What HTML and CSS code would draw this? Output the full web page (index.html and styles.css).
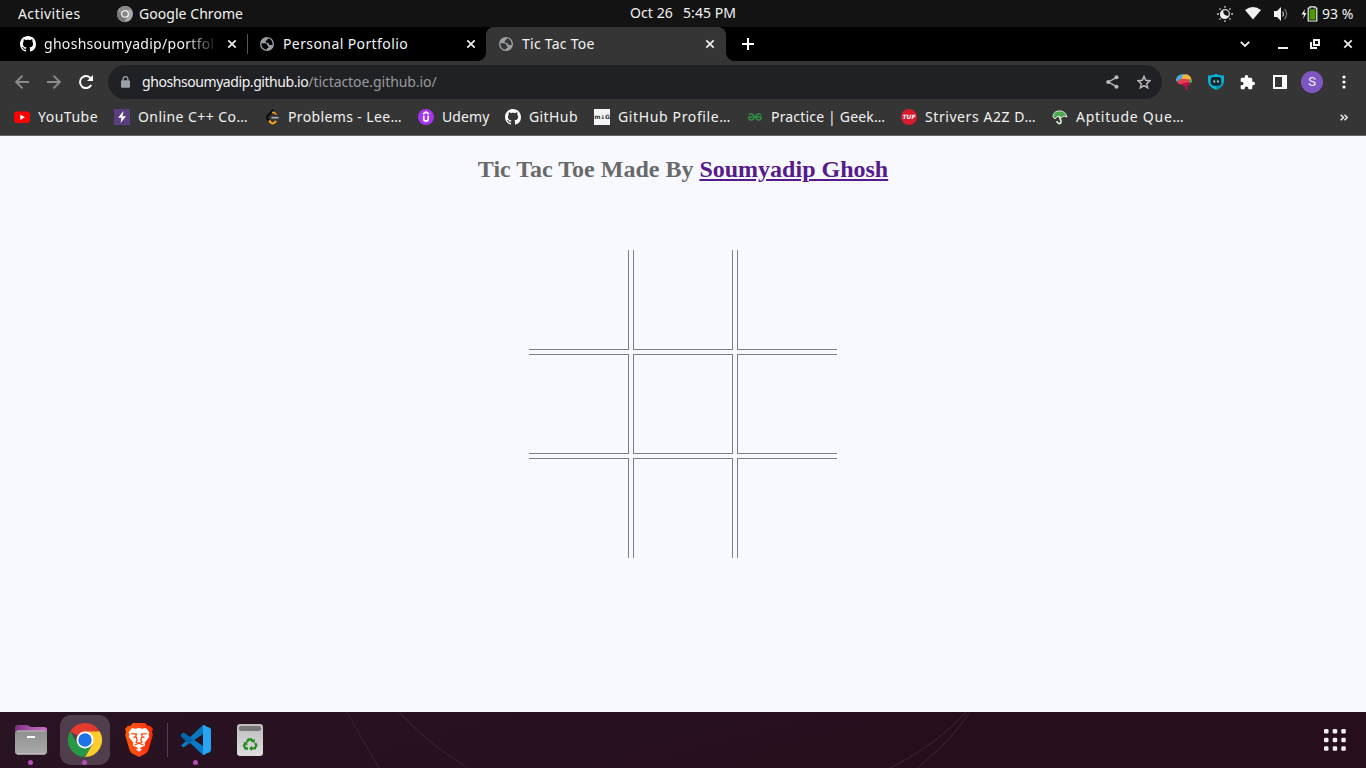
FILE: index.html
```html
<!DOCTYPE html>
<html lang="en">
<head>
<meta charset="utf-8">
<title>Tic Tac Toe</title>
<link rel="stylesheet" href="styles.css">
</head>
<body>
<svg class="defs" width="0" height="0" aria-hidden="true">
  <symbol id="github" viewBox="0 0 16 16"><path fill="#fff" d="M8 0C3.58 0 0 3.58 0 8c0 3.54 2.29 6.53 5.47 7.59.4.07.55-.17.55-.38 0-.19-.01-.82-.01-1.49-2.01.37-2.53-.49-2.69-.94-.09-.23-.48-.94-.82-1.13-.28-.15-.68-.52-.01-.53.63-.01 1.08.58 1.23.82.72 1.21 1.87.87 2.33.66.07-.52.28-.87.51-1.07-1.78-.2-3.64-.89-3.64-3.95 0-.87.31-1.59.82-2.15-.08-.2-.36-1.02.08-2.12 0 0 .67-.21 2.2.82.64-.18 1.32-.27 2-.27s1.36.09 2 .27c1.53-1.04 2.2-.82 2.2-.82.44 1.1.16 1.92.08 2.12.51.56.82 1.27.82 2.15 0 3.07-1.87 3.75-3.65 3.95.29.25.54.73.54 1.48 0 1.07-.01 1.93-.01 2.2 0 .21.15.46.55.38A8.01 8.01 0 0 0 16 8c0-4.42-3.58-8-8-8z"/></symbol>
  <symbol id="globe" viewBox="2 2 20 20"><circle cx="12" cy="12" r="10" fill="#9aa0a6"/><path fill="var(--land)" d="M4.200 11H9q3.500 0 3.500 2.500t2 2q.5 2.500-2.500 2.500v2H11C7 19.500 4 16.100 4 12c0-.5.100-.7.2-1ZM13 4.200h2C17.900 5.400 20 8.600 20 12l-.2 1.300h-4.300L14 10.500l-3-.3-1-1.700q0-1.700 2-1.700Z"/></symbol>
  <symbol id="close" viewBox="0 0 10 10"><path d="m1.300 1.300 7.400 7.400m0-7.400L1.300 8.700" stroke="#eee" stroke-width="1.700"/></symbol>
</svg>

<header class="panel">
  <span class="activities">Activities</span>
  <span class="app"><svg width="16" height="16" viewBox="0 0 16 16"><circle cx="8" cy="8" r="8" fill="#aaa"/><path d="M8 0a8 8 0 0 1 7 4H8a4 4 0 0 0-4 3L2 3a8 8 0 0 1 6-3" fill="#898989"/><path d="M1 4a8 8 0 0 0 6 12l4-6H6Z" fill="#777"/><circle cx="8" cy="8" r="3.300" fill="#858585" stroke="#fff" stroke-width="1.100"/></svg><span class="app-name">Google Chrome</span></span>
  <span class="clock"><span class="date">Oct 26</span><span class="time">5:45 PM</span></span>
  <span class="status">
    <svg width="16" height="16" viewBox="0 0 16 16"><circle cx="8" cy="8" r="4.300" fill="none" stroke="#ddd" stroke-width="1.200"/><path d="M6.400 4.500A4.200 4.200 0 1 0 11.500 9.600 4.200 4.200 0 0 1 6.400 4.500" fill="#eee"/><path d="M8 0v1.800M8 14.200V16M0 8h1.800M14.200 8H16M2.500 2.500l1.100 1.100m8.800 8.800 1.100 1.100m0-11-1.100 1.100m-8.800 8.800-1.100 1.100" stroke="#ddd" stroke-width="1.300"/></svg>
    <svg width="16" height="13" viewBox="0 0 16 13"><path d="M0 3Q8-2.800 16 3L8 12.500Z" fill="#f2f2f2"/></svg>
    <svg width="16" height="14" viewBox="0 0 16 14"><path d="M1 4h3l4-4v14l-4-4H1Z" fill="#f2f2f2"/><path d="M9.500 4.500q2 2.500 0 5" fill="none" stroke="#ccc" stroke-width="1.100"/><path d="M11.500 2q4.300 5 0 10" fill="none" stroke="#777" stroke-width="1.200"/></svg>
    <svg width="17" height="16" viewBox="0 0 17 16"><path d="M4 3 .5 8.500H3L2 13l3.500-6H3.300Z" fill="#f2f2f2"/><path d="M9 2V.8h5V2h1.800v13H7.200V2Z" fill="none" stroke="#f2f2f2" stroke-width="1.200"/><path d="M8.500 3.200h6v10.400h-6z" fill="#4e9a06"/></svg>
    <span class="percent">93 %</span>
  </span>
</header>

<nav class="tabs">
  <div class="tab first"><svg width="16" height="16"><use href="#github"/></svg><span class="tab-title faded">ghoshsoumyadip/portfol</span><svg class="x" width="10" height="10"><use href="#close"/></svg></div>
  <div class="tab second"><svg width="14" height="14"><use href="#globe"/></svg><span class="tab-title">Personal Portfolio</span><svg class="x" width="10" height="10"><use href="#close"/></svg></div>
  <div class="tab active"><svg width="14" height="14"><use href="#globe"/></svg><span class="tab-title ttt">Tic Tac Toe</span><svg class="x" width="10" height="10"><use href="#close"/></svg></div>
  <svg class="plus" width="12" height="12"><path d="M6 0v12M0 6h12" stroke="#fff" stroke-width="2"/></svg>
  <div class="window-buttons">
    <svg width="10" height="6"><path d="m.8.8 4.200 4.200L9.200.8" fill="none" stroke="#eee" stroke-width="1.800"/></svg>
    <svg width="10" height="10"><path d="M0 9h10" stroke="#eee" stroke-width="2"/></svg>
    <svg width="10" height="10"><path d="M4 1h5v5H4ZM1 3v6h6" fill="none" stroke="#eee" stroke-width="2"/></svg>
    <svg width="10" height="10"><use href="#close"/></svg>
  </div>
</nav>

<div class="toolbar">
  <div class="nav-buttons">
    <svg width="14" height="14"><path d="M14 7H1m6.500-6.300L1.200 7l6.300 6.300" fill="none" stroke="#8b8b8b" stroke-width="1.900"/></svg>
    <svg width="14" height="14"><path d="M0 7h13M6.500.7 12.800 7l-6.300 6.300" fill="none" stroke="#8b8b8b" stroke-width="1.900"/></svg>
    <svg width="14" height="14"><path d="M12.200 10.100a6 6 0 1 1-.5-6.800" fill="none" stroke="#fff" stroke-width="2"/><path d="M14 0v6H8Z" fill="#fff"/></svg>
  </div>
  <div class="omnibox">
    <svg width="9" height="12" viewBox="0 0 9 12"><path d="M2.100 5V3a2.400 2.400 0 0 1 4.800 0v2" fill="none" stroke="#9aa0a6" stroke-width="1.300"/><rect y="4.200" width="9" height="7.600" rx="1" fill="#9aa0a6"/></svg>
    <span class="url"><span class="host">ghoshsoumyadip.github.io</span><span class="path">/tictactoe.github.io/</span></span>
    <svg class="share" width="13" height="14"><path d="m10.500 2.300-8 4.700 8 4.700" fill="none" stroke="#bbb" stroke-width="1.400"/><g fill="#bbb"><circle cx="10.500" cy="2.300" r="2"/><circle cx="2.200" cy="7" r="2"/><circle cx="10.500" cy="11.700" r="2"/></g></svg>
    <svg class="star" width="14" height="14"><path d="m7 1.300 1.700 4 4.300.4-3.300 2.900 1 4.300L7 10.600l-3.700 2.300 1-4.300L1 5.700l4.300-.4Z" fill="none" stroke="#bbb" stroke-width="1.400"/></svg>
  </div>
  <div class="extensions">
    <svg width="16" height="16"><path d="M0 7Q-.5 1 7 0l3 1-2 5-6 2Z" fill="#4fa8df"/><path d="M6 2.500Q9-.8 12.500 1q2.800 1.500 3 5l-5 1-4.500-2Z" fill="#f6b73c"/><path d="M12 5.500h4q.5 3-2 4l-3-1Z" fill="#4bb543"/><path d="M1 7.500Q4 4 9 5l5 .5-2 4-6 1Q2 10.500 1 7.500" fill="#e83b50"/><path d="m6 9.500 8-1.500.5 2q-2 2-4 1.700L12 15l-2 1-1.500-4Q6 12 6 9.500" fill="#b91351"/></svg>
    <svg width="16" height="16"><path d="M8 0q4 1.500 8 1.500v5Q16 13 8 16 0 13 0 6.500v-5Q4 1.500 8 0" fill="#08b4d3"/><path d="M8 11.500V16q6-2.300 7.500-7Z" fill="#0793b2"/><path d="M5 3h6q2 0 2.300 2v4.500Q12 12 8 12t-5.300-2.500V5Q3 3 5 3" fill="#102932"/><path d="M5.500 6.500h1.600v2H5.500zm3.600 0h1.600v2H9.100z" fill="#c5eaf1"/></svg>
    <svg width="15" height="15" viewBox="1 1 22 22"><path fill="#fff" d="M20.500 11H19V7c0-1.100-.9-2-2-2h-4V3.500a2.500 2.500 0 0 0-5 0V5H4c-1.100 0-2 .9-2 2v3.800h1.500a2.700 2.700 0 0 1 0 5.400H2V20c0 1.100.9 2 2 2h3.800v-1.500a2.700 2.700 0 0 1 5.400 0V22H17c1.100 0 2-.9 2-2v-4h1.500a2.500 2.500 0 0 0 0-5z"/></svg>
    <svg width="14" height="14"><path d="M0 0h14v14H0Zm2 2v10h7V2Z" fill="#fff" fill-rule="evenodd"/></svg>
    <span class="avatar">S</span>
    <svg class="dots" width="4" height="14"><g fill="#fff"><circle cx="2" cy="2" r="1.600"/><circle cx="2" cy="7" r="1.600"/><circle cx="2" cy="12" r="1.600"/></g></svg>
  </div>
</div>

<div class="bookmarks">
  <a class="bm"><svg width="16" height="16"><rect y="2.500" width="16" height="11.500" rx="3" fill="#f00"/><path d="m6.300 5.500 4.500 2.700-4.500 2.700Z" fill="#fff"/></svg><span class="w60">YouTube</span></a>
  <a class="bm"><svg width="16" height="16"><path d="M0 0h16v16H0Z" fill="#583e7e"/><path d="M9.500 2 4 8.700h3.500L6.500 14 12 7.300H8.500Z" fill="#fff"/></svg><span class="w110">Online C++ Co…</span></a>
  <a class="bm"><svg width="16" height="16"><path d="M9.500 1 4 6.500Q2.300 8.200 3.700 10l1.600 1.800" fill="none" stroke="#080808" stroke-width="2"/><path d="m8 3.700q1.500-.7 2.700.3l1.700 1.500" fill="none" stroke="#ffa116" stroke-width="1.600"/><path d="m5 11.500 2 2.200q1.600 1.500 3.300 0l1.900-1.700" fill="none" stroke="#ffa116" stroke-width="2"/><path d="M7.500 8.700h7" stroke="#b3b3b3" stroke-width="1.600"/></svg><span class="w114 problems">Problems - Lee…</span></a>
  <a class="bm"><svg width="16" height="16"><circle cx="8" cy="8" r="8" fill="#a435f0"/><path d="m5 5 3-2 3 2M5.800 6.500V10q0 2.200 2.200 2.200t2.200-2.200V6.500" fill="none" stroke="#fff" stroke-width="1.700"/></svg><span class="w48">Udemy</span></a>
  <a class="bm gh"><svg width="16" height="16"><use href="#github"/></svg><span class="w49">GitHub</span></a>
  <a class="bm"><span class="mdg">m↓G</span><span class="w113">GitHub Profile…</span></a>
  <a class="bm"><svg width="16" height="16"><path d="M1 8h14M1.600 8Q1.500 11 4.200 11 7 11 7.300 8 7 5 4.300 5q-1.500 0-2.300 1M14.400 8q.1 3-2.600 3-2.800 0-3.100-3Q9 5 11.700 5q1.500 0 2.300 1" fill="none" stroke="#2f8d46" stroke-width="1.500"/></svg><span class="w114 geek">Practice | Geek…</span></a>
  <a class="bm"><span class="tuf">TUF</span><span class="w111">Strivers A2Z D…</span></a>
  <a class="bm"><svg width="16" height="16"><path d="M1 8Q1 3 6 2q7-1 9 6l-3-1-3 2-3-2-3 3Z" fill="#4da750" stroke="#d6e8d5"/><path d="m7 7 2 5q0 3-2 2.500T5 12" fill="none" stroke="#d8eed8" stroke-width="1.700"/></svg><span class="w108">Aptitude Que…</span></a>
  <svg class="overflow" width="8" height="7"><path d="m.7.7 2.800 2.800L.7 6.300M4.500.7l2.800 2.800-2.800 2.800" fill="none" stroke="#eee" stroke-width="1.500"/></svg>
</div>

<main class="page">
  <h2 class="heading">Tic Tac Toe Made By <a href="#">Soumyadip Ghosh</a></h2>
  <div class="board">
    <div class="cell r b"></div><div class="cell l r b"></div><div class="cell l b"></div>
    <div class="cell t r b"></div><div class="cell t l r b"></div><div class="cell t l b"></div>
    <div class="cell t r"></div><div class="cell t l r"></div><div class="cell t l"></div>
  </div>
</main>

<footer class="dock">
  <svg class="wallpaper" width="1366" height="56"><g fill="none" stroke="#35202a" stroke-width="1.200"><path d="M347 0q14 25 32 56M399 0q28 31 69 56M966 0q-30 33-76 56M970 0q-18 28-53 56"/></g></svg>
  <div class="launch running"><svg width="32" height="30"><defs><linearGradient id="fg" x2="0" y2="1"><stop stop-color="#8f8f8f"/><stop offset="1" stop-color="#aaa"/></linearGradient><linearGradient id="fp"><stop stop-color="#7b2d85"/><stop offset=".5" stop-color="#a855ab"/><stop offset="1" stop-color="#c672c5"/></linearGradient></defs><path d="M0 11V3q0-3 3-3h8q2 0 3 1t3 1h12q3 0 3 3v6Z" fill="url(#fp)"/><rect y="5.500" width="32" height="24" rx="3" fill="url(#fg)"/><path d="M2 6h28" stroke="#b9b9b9"/><path d="M2 29h28" stroke="#ccc"/><path d="M12 12h8" stroke="#fff" stroke-width="2"/></svg></div>
  <div class="launch running focused"><svg width="34" height="34" viewBox="0 0 48 48"><path d="M24 24 3.200 12a24 24 0 0 1 41.600 0Z" fill="#e33b2e"/><path d="M24 24 44.800 12A24 24 0 0 1 24 48l10.400-18Z" fill="#ffcd2e"/><path d="M34.400 30 24 48A24 24 0 0 1 3.200 12l10.400 18Z" fill="#279847"/><path d="M24 12h20.800L34.400 30Z" fill="#ffcd2e"/><path d="m3.200 12 10.400 18L24 36l-6 8A24 24 0 0 1 3.200 12" fill="#279847"/><circle cx="24" cy="24" r="12" fill="#fff"/><circle cx="24" cy="24" r="9.500" fill="#1a73e8"/></svg></div>
  <div class="launch"><svg width="28" height="34"><defs><linearGradient id="br"><stop stop-color="#ff5500"/><stop offset=".5" stop-color="#ff4718"/><stop offset="1" stop-color="#ff2500"/></linearGradient></defs><path d="M8 0h12l3 3 2-.3 3 3.300-1 3 .8 3-4 14q-1 3-3 4.500L14 34l-6.800-3.500q-2-1.500-3-4.500L.2 12l.8-3-1-3 3-3.300 2 .3Z" fill="url(#br)"/><path d="m7 5 3.500.8L14 5l3.500.8L21 5l3.500 4.500-1 2 .8 2.500-4.600 5.500.5 3-4.400 2-1.800 2-1.800-2-4.400-2 .5-3L3.700 14l.8-2.500-1-2Z" fill="#fff"/><path d="M6.300 10.700 11.500 11l-.7 2 1.400 4-1.200 2 3 1.300 3-1.300-1.200-2 1.400-4-.7-2 5.200-.3M8.500 14.500l2.500-.7M19.500 14.500l-2.500-.7M9.500 22l4.500-1.800 4.500 1.800" fill="none" stroke="#ff4b12" stroke-width="1.300"/><path d="m14 25.300 3 1.200-3 2.200-3-2.200Z" fill="#fff"/></svg></div>
  <span class="divider"></span>
  <div class="launch running"><svg width="30" height="30"><path d="m0 9.500 2.500-2L24 22.500V30h-2Z" fill="#087bc7"/><path d="m0 20.500 2.500 2L24 7.500V0h-2Z" fill="#0879bd"/><path d="m2.500 7.500 9.500 7.500-4.500 3.700L0 11.500q-1-1 0-2Z" fill="#0065a9"/><path d="m22 0 6.500 2.800Q30 3.400 30 5v20q0 1.600-1.500 2.200L22 30V0Z" fill="#27a5f3"/></svg></div>
  <div class="launch"><svg width="26" height="32"><defs><linearGradient id="tg" x2="0" y2="1"><stop stop-color="#bcbcbc"/><stop offset="1" stop-color="#dedede"/></linearGradient></defs><rect width="26" height="32" rx="3" fill="url(#tg)"/><rect x="2" y="2" width="22" height="5" rx="2" fill="#777"/><path d="m9.800 18 1.700-2.500h3l1.500 2.500M18.300 19l1 2.500-1.500 2.800h-3.300M11 24.500H8.500l-1.500-3 1.500-2.500" fill="none" stroke="#268b26" stroke-width="2.300"/><path d="m14 18 4 .8-.2-4ZM15 21.500v5.500L12 24.500ZM6 18.500l4-.5.500 3.800Z" fill="#268b26"/></svg></div>
  <svg class="apps" width="22" height="22"><g fill="#f3eff2"><rect width="4.500" height="4.500" rx="1.300"/><rect x="8.700" width="4.500" height="4.500" rx="1.300"/><rect x="17.300" width="4.500" height="4.500" rx="1.300"/><rect y="8.700" width="4.500" height="4.500" rx="1.300"/><rect x="8.700" y="8.700" width="4.500" height="4.500" rx="1.300"/><rect x="17.300" y="8.700" width="4.500" height="4.500" rx="1.300"/><rect y="17.300" width="4.500" height="4.500" rx="1.300"/><rect x="8.700" y="17.300" width="4.500" height="4.500" rx="1.300"/><rect x="17.300" y="17.300" width="4.500" height="4.500" rx="1.300"/></g></svg>
</footer>
</body>
</html>
```
FILE: styles.css
```css
* { box-sizing: border-box; }
body { margin: 0; width: 1366px; height: 768px; overflow: hidden; display: flex; flex-direction: column; background: #f8f9ff; color: #f2f2f2; font: 14px/20px "Noto Sans", "Open Sans", sans-serif; white-space: nowrap; }
svg { display: block; flex: none; }
.defs { position: absolute; }

.panel { height: 27px; background: #131313; display: grid; grid-template-columns: 117px 513px 1fr auto; align-items: center; padding-right: 13px; }
.activities { padding-left: 18px; letter-spacing: .42px; }
.app { display: flex; gap: 6px; align-items: center; }
.app-name { letter-spacing: .05px; }
.clock { display: flex; gap: 10px; margin-top: -1px; }
.date { letter-spacing: .1px; }
.time { letter-spacing: .08px; }
.status { display: flex; align-items: center; }
.status svg { margin-right: 12px; }
.status svg:nth-of-type(4) { margin-right: 4px; }
.percent { width: 31px; }

.tabs { height: 34px; background: #000; display: flex; align-items: center; }
.tab { --land: #000; height: 34px; display: flex; align-items: center; position: relative; }
.tab .x { margin-left: auto; }
.tab-title { letter-spacing: .4px; }
.ttt { letter-spacing: .25px; }
.first { width: 248px; padding: 0 11px 0 20px; gap: 8px; }
.first::after { content: ""; position: absolute; right: 0; top: 7px; width: 1px; height: 20px; background: #555; }
.faded { letter-spacing: .3px; mask-image: linear-gradient(to right, #000 142px, transparent 174px); }
.second { width: 238px; padding: 0 10px 0 12px; gap: 9px; }
.active { --land: #353535; width: 240px; padding: 0 11px 0 13px; gap: 9px; background: #353535; border-radius: 8px 8px 0 0; }
.active::before, .active::after { content: ""; position: absolute; bottom: 0; width: 8px; height: 8px; }
.active::before { left: -8px; background: radial-gradient(circle at 0 0, #000 7.5px, #353535 8px); }
.active::after { right: -8px; background: radial-gradient(circle at 100% 0, #000 7.5px, #353535 8px); }
.plus { margin-left: 16px; }
.window-buttons { margin-left: auto; padding-right: 13px; display: flex; align-items: center; gap: 22px; }
.window-buttons svg:first-child { margin-right: 6px; }
.window-buttons svg:nth-child(3) { margin-right: 1px; }

.toolbar { height: 38px; background: #353535; display: flex; align-items: center; padding: 4px 20px 0 15px; }
.nav-buttons { display: flex; flex: none; gap: 18px; width: 93px; }
.omnibox { flex: none; width: 1054px; height: 34px; border-radius: 17px; background: #202124; display: flex; align-items: center; padding: 0 11px 0 13px; }
.url { margin-left: 12px; }
.host { letter-spacing: -.43px; }
.path { color: #9a9b9d; letter-spacing: -.06px; }
.share { margin-left: auto; margin-right: 18px; }
.extensions { display: flex; align-items: center; padding-left: 14px; }
.extensions > svg:nth-child(-n+3) { margin-right: 16px; }
.extensions > svg:nth-child(4) { margin-right: 14px; margin-left: 2px; }
.avatar { flex: none; width: 22px; height: 22px; border-radius: 50%; background: #7e57c2; text-align: center; font: 13px/22px Roboto, sans-serif; }
.dots { margin-left: 19px; }

.bookmarks { height: 37px; background: #353535; border-bottom: 1px solid #626262; display: flex; align-items: center; gap: 16px; padding: 0 18px 0 14px; }
.bm { display: flex; gap: 8px; align-items: center; }
.bm.gh { margin-left: -1px; }
.overflow { margin-left: auto; }
.mdg { width: 16px; height: 16px; background: #f4f4f8; color: #333; font: bold 6px/16px "DejaVu Sans", sans-serif; text-align: center; letter-spacing: -.3px; }
.tuf { width: 16px; height: 16px; border-radius: 50%; background: #d51c2e; color: #fff; font: italic bold 6px/16px "DejaVu Sans", sans-serif; text-align: center; }
.w60 { width: 60px; letter-spacing: .5px; }
.w110 { width: 110px; letter-spacing: .43px; }
.w114 { width: 114px; }
.problems { letter-spacing: .37px; }
.geek { letter-spacing: .18px; }
.w48 { width: 48px; letter-spacing: .12px; }
.w49 { width: 49px; letter-spacing: .4px; }
.w113 { width: 113px; letter-spacing: .63px; }
.w111 { width: 111px; letter-spacing: .57px; }
.w108 { width: 108px; letter-spacing: .75px; }

.page { height: 576px; display: flex; flex-direction: column; align-items: center; }
.heading { margin: 20px 0 0; font: bold 24px/27px "Liberation Serif", serif; color: #696969; }
.heading a { color: #551a8b; }
.board { margin-top: 67px; display: grid; grid-template: repeat(3, 100px) / repeat(3, 100px); gap: 4px; }
.cell { border: 0 solid #808080; }
.t { border-top-width: 1px; } .r { border-right-width: 1px; } .b { border-bottom-width: 1px; } .l { border-left-width: 1px; }

.dock { height: 56px; position: relative; display: flex; align-items: center; padding: 0 20px 0 6px; background: linear-gradient(165deg, #291424, #260e1d 65%); }
.wallpaper { position: absolute; left: 0; top: 0; }
.launch { position: relative; width: 50px; height: 50px; margin-right: 4px; display: flex; align-items: center; justify-content: center; }
.focused { background: #513e4d; border-radius: 11px; }
.running::after { content: ""; position: absolute; left: 22px; bottom: 0; width: 5px; height: 5px; border-radius: 50%; background: #b54bb5; }
.divider { width: 1px; height: 34px; background: #51404b; margin: 0 3px 0 -1px; position: relative; }
.apps { margin-left: auto; position: relative; }
```
